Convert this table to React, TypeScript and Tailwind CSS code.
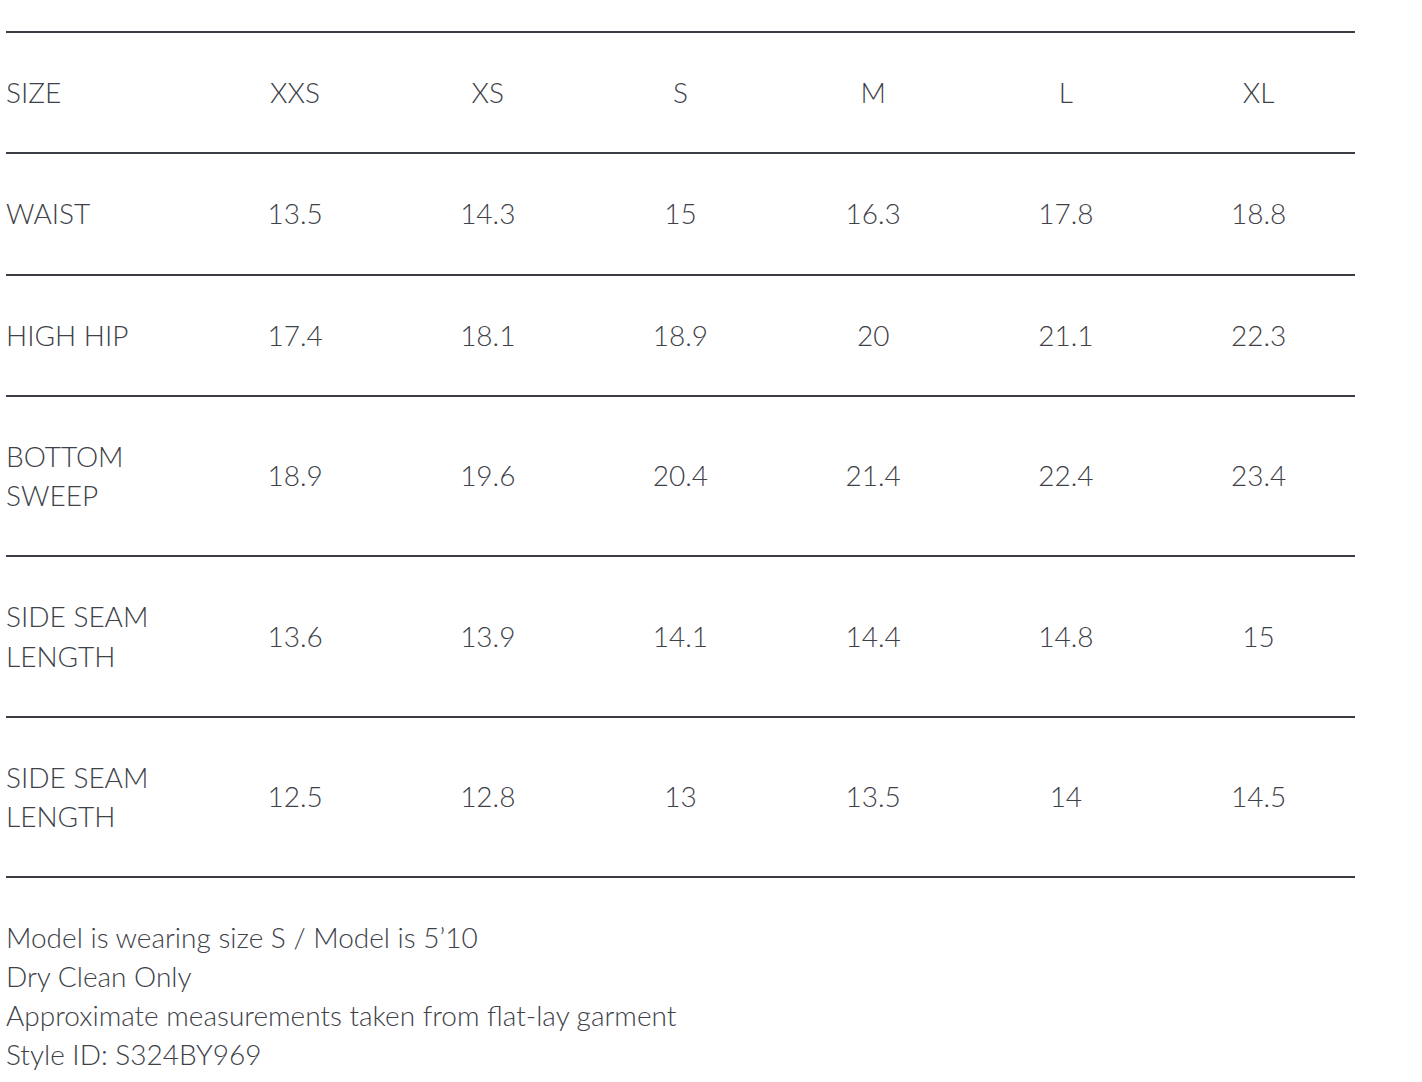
const COLS = ["SIZE", "XXS", "XS", "S", "M", "L", "XL"];

const ROWS: { label: string[]; values: string[] }[] = [
  { label: ["WAIST"], values: ["13.5", "14.3", "15", "16.3", "17.8", "18.8"] },
  { label: ["HIGH HIP"], values: ["17.4", "18.1", "18.9", "20", "21.1", "22.3"] },
  { label: ["BOTTOM", "SWEEP"], values: ["18.9", "19.6", "20.4", "21.4", "22.4", "23.4"] },
  { label: ["SIDE SEAM", "LENGTH"], values: ["13.6", "13.9", "14.1", "14.4", "14.8", "15"] },
  { label: ["SIDE SEAM", "LENGTH"], values: ["12.5", "12.8", "13", "13.5", "14", "14.5"] },
];

const NOTES = [
  "Model is wearing size S / Model is 5\u201910",
  "Dry Clean Only",
  "Approximate measurements taken from flat-lay garment",
  "Style ID: S324BY969",
];

export default function App() {
  return (
    <div
      className="min-h-screen bg-white pl-[6px] pt-[31px] font-light text-[#3d4148]"
      style={{ fontFamily: "Lato, 'Open Sans', sans-serif" }}
    >
      <div className="w-[1349px]">
        <table className="w-full table-fixed border-collapse text-[28px] leading-[39.25px]">
          <thead>
            <tr className="border-y-2 border-[#3a3e44]">
              {COLS.map((c, i) => (
                <th
                  key={i}
                  className={`py-[40px] font-light ${i === 0 ? "text-left" : "text-center"}`}
                >
                  {c}
                </th>
              ))}
            </tr>
          </thead>
          <tbody>
            {ROWS.map((r, ri) => (
              <tr key={ri} className="border-b-2 border-[#3a3e44]">
                <td className="py-[40px] text-left align-middle">
                  {r.label.map((l) => (
                    <div key={l}>{l}</div>
                  ))}
                </td>
                {r.values.map((v, vi) => (
                  <td key={vi} className="py-[40px] text-center align-middle">
                    {v}
                  </td>
                ))}
              </tr>
            ))}
          </tbody>
        </table>

        {/* product notes */}
        <div className="mt-[40px] text-[28px] leading-[39px]">
          {NOTES.map((n) => (
            <p key={n}>{n}</p>
          ))}
        </div>
      </div>
    </div>
  );
}
